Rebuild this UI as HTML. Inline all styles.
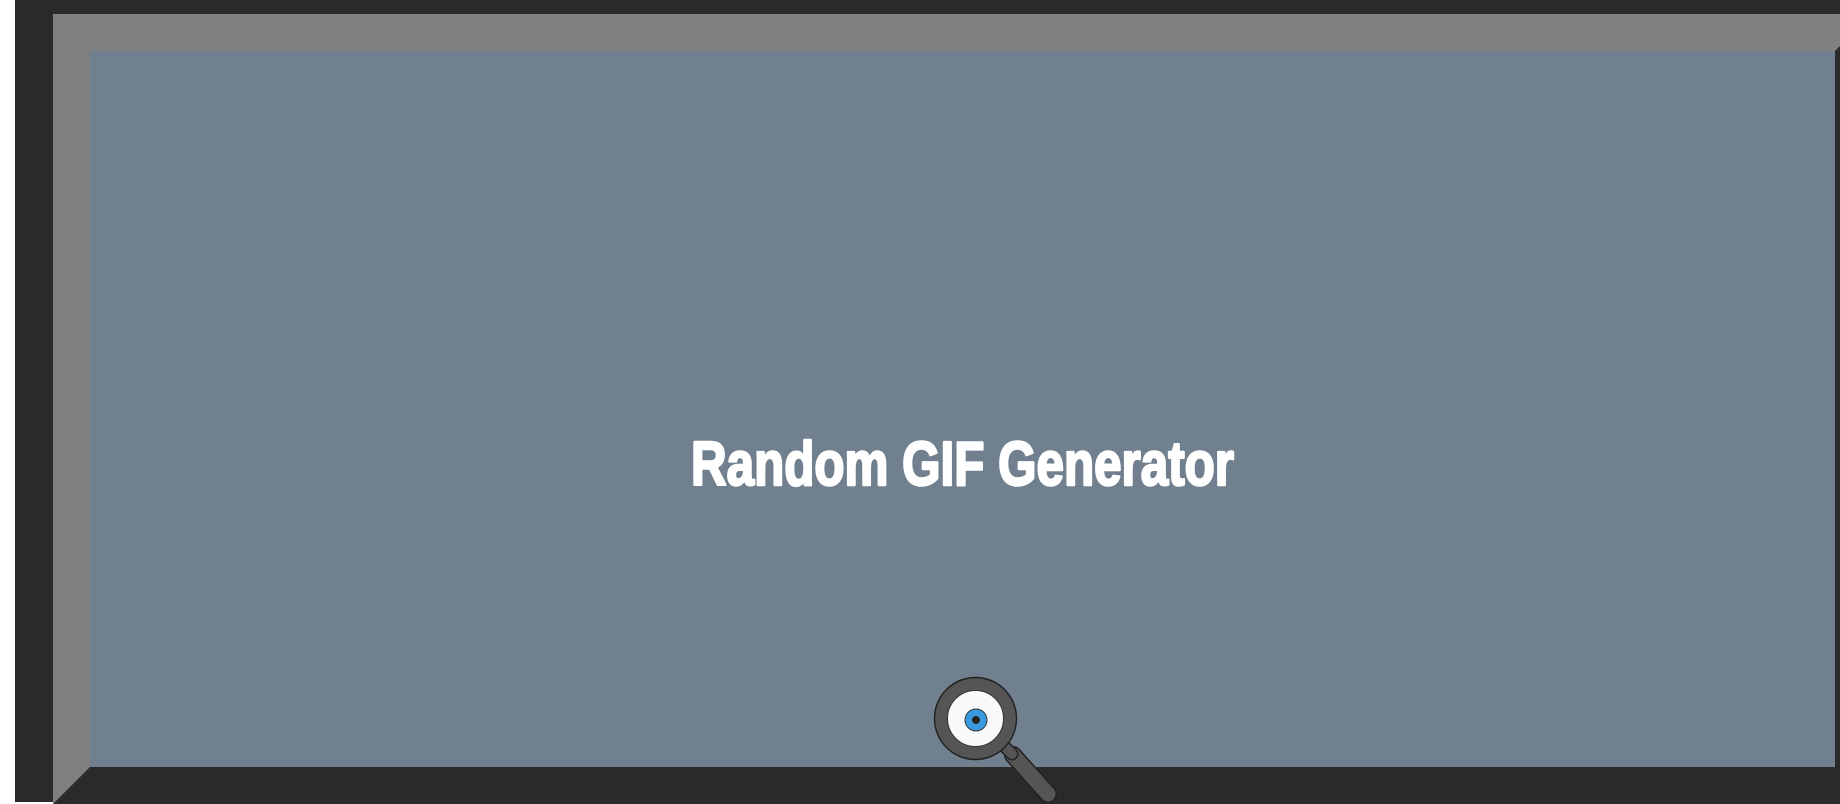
<!DOCTYPE html>
<html><head><meta charset="utf-8"><style>
html,body{margin:0;padding:0;width:1840px;height:802px;overflow:hidden;background:#fff;}
.outer{position:absolute;left:15px;top:0;width:1825px;height:802px;background:#2a2a2a;}
.box{position:absolute;left:53px;top:14px;width:1745px;height:716px;border-style:solid;border-width:37px;border-color:#808080 #2a2a2a #2a2a2a #808080;background:#71808f;}
svg{position:absolute;left:0;top:0;}
</style></head><body>
<div class="outer"></div>
<div class="box"></div>
<svg width="1840" height="802" viewBox="0 0 1840 802">
<text x="691" y="485" textLength="543" lengthAdjust="spacingAndGlyphs" font-family="Liberation Sans Narrow, Liberation Sans, sans-serif" font-weight="bold" font-size="62" fill="#fff" stroke="#fff" stroke-width="2.5" stroke-linejoin="round">Random GIF Generator</text>
<line x1="1013" y1="755" x2="1048" y2="794" stroke="#222" stroke-width="18" stroke-linecap="round"/>
<line x1="1013" y1="755" x2="1048" y2="794" stroke="#555" stroke-width="15" stroke-linecap="round"/>
<line x1="1000" y1="742" x2="1012" y2="754" stroke="#222" stroke-width="13" stroke-linecap="round"/>
<line x1="1000" y1="742" x2="1012" y2="754" stroke="#555" stroke-width="10" stroke-linecap="round"/>
<circle cx="975.5" cy="718.5" r="41" fill="#555" stroke="#222" stroke-width="1.5"/>
<circle cx="975.5" cy="718.5" r="28" fill="#fafafa" stroke="#333" stroke-width="1"/>
<circle cx="976" cy="720" r="11" fill="#3a9ae0" stroke="#333" stroke-width="1"/>
<circle cx="976" cy="720" r="4" fill="#222"/>
</svg>
</body></html>
